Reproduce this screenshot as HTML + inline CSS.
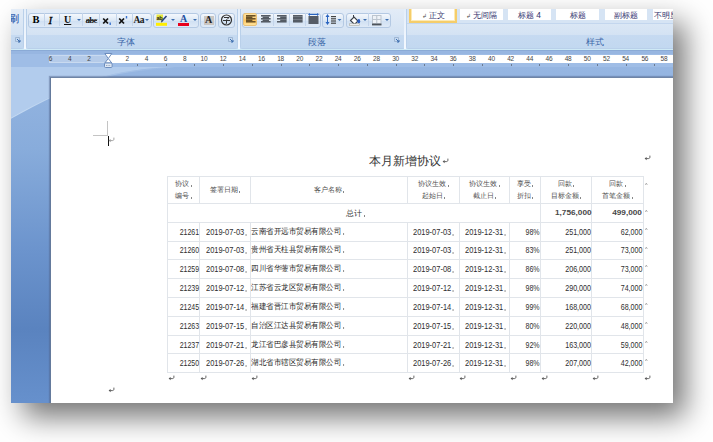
<!DOCTYPE html>
<html><head><meta charset="utf-8">
<style>
*{box-sizing:border-box;margin:0;padding:0}
html,body{width:713px;height:442px;overflow:hidden;background:#fff;font-family:"Liberation Sans",sans-serif}
#shadow{position:absolute;left:11px;top:9px;width:662px;height:394px;box-shadow:12px 14px 28px rgba(0,0,0,.55)}
#win{position:absolute;left:11px;top:9px;width:662px;height:394px;overflow:hidden;background:#c4d9f1}
#in{position:absolute;left:-11px;top:-9px;width:713px;height:442px}
.a{position:absolute}
/* ribbon */
#ribbon{left:0;top:0;width:713px;height:50px;background:#c9def5}
.grp{position:absolute;top:9px;height:40px;border:1px solid #b9d0ea;border-top:none;border-radius:0 0 3px 3px;background:linear-gradient(#e3ecf7,#d3e2f3 70%,#d8e5f4)}
.lbl{position:absolute;left:0;right:0;bottom:0;height:13.5px;background:linear-gradient(#c6daf1,#c2d8f0);color:#3b67a8;font-size:8.5px;line-height:14px;text-align:center;padding-right:12px}
.bar{position:absolute;top:13px;height:15px;border:1px solid #b4c9e3;border-radius:3px;background:linear-gradient(#f4f8fd,#dce8f5 50%,#cfdff2 51%,#dfeaf7)}
.sep{position:absolute;top:13px;width:1px;height:13px;background:#c3d4ea}
/* ruler */
#rulerbg{left:0;top:49px;width:713px;height:19px;background:linear-gradient(#8fb2df,#9dbce6 3px,#a6c3ea)}
#docbg{left:0;top:68px;width:713px;height:380px;background:linear-gradient(#adc8eb,#9ebde6 40px,#80a6d8 120px,#6890c9 200px,#5b85c1 270px,#6390cc 340px)}
#page{left:50px;top:77px;width:700px;height:400px;background:#fff;border-left:1px solid #647a9c;border-top:1px solid #6f85a6;box-shadow:-1px -1px 1px rgba(80,100,140,.45)}
.num{position:absolute;top:55px;font-size:6.5px;line-height:8px;color:#444;width:20px;margin-left:-10px;text-align:center;letter-spacing:-0.3px}
/* table */
.ht{position:absolute;height:12px;line-height:12px;font-size:7.2px;color:#4e4e4e;text-align:center;white-space:nowrap}
.tt{position:absolute;height:12px;line-height:12px;font-size:8.3px;color:#2e2e2e;white-space:nowrap}
.tt.cj{font-size:7.5px;letter-spacing:0;color:#262626}
.tt.b{font-weight:bold;color:#484848;font-size:8px}
.cm{display:inline-block;width:1px;height:2px;background:#888;margin-left:1.5px;vertical-align:-1px}
.rm{position:absolute;width:2.5px;height:2.5px;border-left:1px solid #9a9a9a;border-top:1px solid #9a9a9a;transform:translate(1px,1px) rotate(45deg) scale(.65)}
.sep2{position:absolute;top:9px;width:2px;height:40px;background:linear-gradient(#e4eefa,#f4f9ff)}
.sty{background:#fff;font-size:8.4px;line-height:12px;color:#33336e;text-align:center;white-space:nowrap;overflow:hidden}
.pm2{font-size:6px;color:#555;margin-right:2px}
.pm{position:absolute;font-size:7.5px;color:#555}
</style></head><body>
<div id="shadow"></div>
<div id="win"><div id="in">
  <div id="ribbon" class="a"></div>
  <div class="grp" style="left:0;width:24px"><div class="lbl"></div>
    <div class="a" style="left:8px;top:5px;font-size:9.5px;color:#3460b0;line-height:10px;-webkit-text-stroke:0.2px #3460b0">刷</div></div>
  <div class="grp" style="left:26px;width:212px"><div class="lbl">字体</div></div>
  <div class="grp" style="left:240px;width:165px"><div class="lbl">段落</div></div>
  <div class="grp" style="left:406px;width:380px"><div class="lbl" style="text-align:left;padding-left:179px">样式</div></div>
  <div class="sep2 a" style="left:24px"></div>
  <div class="sep2 a" style="left:238px"></div>
  <div class="sep2 a" style="left:404px"></div>
  <!-- launchers -->
  <svg class="a" style="left:15px;top:37px" width="6" height="6"><path d="M0.5 0.5h4v4h-4z" fill="none" stroke="#9fb6d3"/><path d="M2 2l3 3M5 3v2h-2" stroke="#3d6fb0" fill="none"/></svg>
  <svg class="a" style="left:228px;top:37px" width="6" height="6"><path d="M0.5 0.5h4v4h-4z" fill="none" stroke="#9fb6d3"/><path d="M2 2l3 3M5 3v2h-2" stroke="#3d6fb0" fill="none"/></svg>
  <svg class="a" style="left:394px;top:37px" width="6" height="6"><path d="M0.5 0.5h4v4h-4z" fill="none" stroke="#9fb6d3"/><path d="M2 2l3 3M5 3v2h-2" stroke="#3d6fb0" fill="none"/></svg>
  <!-- font bar 1 -->
  <div class="bar" style="left:28px;width:124px"></div>
  <div class="sep" style="left:44px"></div><div class="sep" style="left:59px"></div><div class="sep" style="left:82px"></div><div class="sep" style="left:99px"></div><div class="sep" style="left:116px"></div><div class="sep" style="left:132px"></div>
  <div class="a" style="left:32.5px;top:14px;font:bold 10.5px/12px 'Liberation Serif',serif;color:#000">B</div>
  <div class="a" style="left:48.5px;top:14px;font:italic 11px/12px 'Liberation Serif',serif;color:#000;-webkit-text-stroke:0.3px #000">I</div>
  <div class="a" style="left:64px;top:14px;font:bold 10px/12px 'Liberation Serif',serif;color:#111;text-decoration:underline">U</div>
  <svg class="a" style="left:77px;top:19px" width="4" height="3"><path d="M0 0h4l-2 2z" fill="#3b6db0"/></svg>
  <div class="a" style="left:85.5px;top:14px;font:bold 9px/12px 'Liberation Serif',serif;color:#1a1a1a;letter-spacing:-0.7px">abc</div><div class="a" style="left:85.5px;top:20px;width:11px;height:1px;background:#333"></div>
  <svg class="a" style="left:102px;top:17px" width="10" height="9"><path d="M1.2 1.5L6 6.5M6 1.5L1.2 6.5" stroke="#111" stroke-width="1.7"/><rect x="7.5" y="5.5" width="1.4" height="2.5" fill="#3b74d0"/></svg>
  <svg class="a" style="left:118px;top:16px" width="10" height="9"><path d="M1.2 2.5L6 7.5M6 2.5L1.2 7.5" stroke="#111" stroke-width="1.7"/><rect x="7.8" y="0" width="1.4" height="2.5" fill="#3b74d0"/></svg>
  <div class="a" style="left:133.5px;top:14px;font:bold 9.5px/12px 'Liberation Serif',serif;color:#1a1a1a;letter-spacing:-0.6px">Aa</div>
  <svg class="a" style="left:145px;top:19px" width="4" height="3"><path d="M0 0h4l-2 2z" fill="#3b6db0"/></svg>
  <!-- font bar 2 -->
  <div class="bar" style="left:153px;width:46px"></div>
  <svg class="a" style="left:156px;top:14px" width="12" height="12"><rect x="0.5" y="0.5" width="6.5" height="6" fill="#e6e640"/><text x="0.6" y="6" font-size="5.5" font-weight="bold" font-family="Liberation Sans" fill="#222" letter-spacing="-0.5">ab</text><path d="M5.5 7.5L10.5 2" stroke="#28407a" stroke-width="1.6"/><path d="M5 8l1.2-0.3" stroke="#444" stroke-width="1"/><rect x="0" y="8.8" width="11" height="3" fill="#ffee00"/></svg>
  <svg class="a" style="left:171px;top:19px" width="4" height="3"><path d="M0 0h4l-2 2z" fill="#3b6db0"/></svg>
  <div class="a" style="left:180px;top:13px;font:bold 10px/11px 'Liberation Serif',serif;color:#2550a0">A</div>
  <div class="a" style="left:178px;top:23px;width:11px;height:3px;background:#e8001c"></div>
  <svg class="a" style="left:193px;top:19px" width="4" height="3"><path d="M0 0h4l-2 2z" fill="#3b6db0"/></svg>
  <!-- font bar 3/4 -->
  <div class="bar" style="left:200px;width:16px"></div>
  <div class="a" style="left:204px;top:16px;width:9.5px;height:8.8px;background:#cac6c2"></div>
  <div class="a" style="left:205px;top:14px;font:bold 10px/11px 'Liberation Serif',serif;color:#222">A</div>
  <div class="bar" style="left:218px;width:17px"></div>
  <svg class="a" style="left:220px;top:14px" width="13" height="12"><circle cx="6.5" cy="6" r="5" fill="none" stroke="#333" stroke-width="1.2"/><path d="M4 3.5h5l-2 2M3 6.5h7M6.5 5.5v4l-1 0.5" fill="none" stroke="#333" stroke-width="1"/></svg>
  <!-- paragraph -->
  <div class="bar" style="left:242px;width:79px"></div>
  <div class="a" style="left:243px;top:13px;width:14px;height:13px;border:1px solid #e9c27a;border-radius:2px;background:linear-gradient(#ffe3a0,#ffcf78 45%,#ffc257 55%,#ffe39a)"></div>
  <div class="sep" style="left:273px"></div><div class="sep" style="left:289px"></div><div class="sep" style="left:305px"></div>
  <svg class="a" style="left:245.5px;top:15.2px" width="11" height="8"><g fill="#6b5226"><rect x="0.0" y="0.00" width="9.6" height="1.55"/><rect x="0.0" y="1.50" width="6.4" height="1.55"/><rect x="0.0" y="3.00" width="9.6" height="1.55"/><rect x="0.0" y="4.50" width="6.4" height="1.55"/><rect x="0.0" y="6.00" width="9.6" height="1.55"/></g></svg>
  <svg class="a" style="left:260.5px;top:15.2px" width="11" height="8"><g fill="#545b64"><rect x="0.0" y="0.00" width="9.6" height="1.55"/><rect x="1.6" y="1.50" width="6.4" height="1.55"/><rect x="0.0" y="3.00" width="9.6" height="1.55"/><rect x="1.6" y="4.50" width="6.4" height="1.55"/><rect x="0.0" y="6.00" width="9.6" height="1.55"/></g></svg>
  <svg class="a" style="left:276.5px;top:15.2px" width="11" height="8"><g fill="#545b64"><rect x="0.0" y="0.00" width="9.6" height="1.55"/><rect x="3.2" y="1.50" width="6.4" height="1.55"/><rect x="0.0" y="3.00" width="9.6" height="1.55"/><rect x="3.2" y="4.50" width="6.4" height="1.55"/><rect x="0.0" y="6.00" width="9.6" height="1.55"/></g></svg>
  <svg class="a" style="left:292.5px;top:15.2px" width="11" height="8"><g fill="#545b64"><rect x="0.0" y="0.00" width="9.6" height="1.55"/><rect x="0.0" y="1.50" width="9.6" height="1.55"/><rect x="0.0" y="3.00" width="9.6" height="1.55"/><rect x="0.0" y="4.50" width="9.6" height="1.55"/><rect x="0.0" y="6.00" width="9.6" height="1.55"/></g></svg>
  <svg class="a" style="left:308px;top:13px" width="11" height="12"><path d="M0 1.5l2-1.5v3zM11 1.5l-2-1.5v3z" fill="#2a64c0"/><rect x="2" y="1" width="7" height="1" fill="#2a64c0"/><rect x="0.5" y="3" width="10" height="8" fill="#555c66"/></svg>
  <div class="bar" style="left:322px;width:22px"></div>
  <svg class="a" style="left:325px;top:14px" width="17" height="12"><path d="M2.5 0l2 3h-4zM2.5 11l2-3h-4z" fill="#2a64c0"/><rect x="2" y="2.5" width="1" height="6" fill="#2a64c0"/><g fill="#444"><rect x="6" y="2" width="5" height="1.2"/><rect x="6" y="4.2" width="5" height="1.2"/><rect x="6" y="6.4" width="5" height="1.2"/><rect x="6" y="8.6" width="5" height="1.2"/></g><path d="M12.5 5h4l-2 2z" fill="#3b6db0"/></svg>
  <div class="bar" style="left:346px;width:45px"></div>
  <div class="sep" style="left:368px"></div>
  <svg class="a" style="left:349px;top:14px" width="12" height="12"><path d="M1.5 6.5L5 3l4 4-3.5 3.5z" fill="#fff" stroke="#3a3f47" stroke-width="1.1"/><path d="M4.5 3.5V1" stroke="#3a3f47" stroke-width="1"/><ellipse cx="9.8" cy="7.3" rx="1.4" ry="2.2" fill="#2a5cc0"/><rect x="0.5" y="9.8" width="10" height="1.8" fill="#f4f4f4" stroke="#a9a9a0" stroke-width="0.6"/></svg>
  <svg class="a" style="left:363px;top:19px" width="4" height="3"><path d="M0 0h4l-2 2z" fill="#3b6db0"/></svg>
  <svg class="a" style="left:372px;top:15px" width="10" height="11"><rect x="0" y="0" width="9.5" height="9" fill="#bcc5cf"/><rect x="1" y="1" width="3.2" height="3" fill="#eef2f7"/><rect x="5.3" y="1" width="3.2" height="3" fill="#eef2f7"/><rect x="1" y="5" width="3.2" height="3" fill="#eef2f7"/><rect x="5.3" y="5" width="3.2" height="3" fill="#eef2f7"/><rect x="0" y="8.6" width="9.5" height="1.8" fill="#4d535a"/></svg>
  <svg class="a" style="left:385px;top:19px" width="4" height="3"><path d="M0 0h4l-2 2z" fill="#3b6db0"/></svg>
  <!-- styles gallery -->
  <div class="a" style="left:407px;top:9px;width:300px;height:15px;background:#d6e4f4;border-bottom:1px solid #c3d6ee"></div>
  <div class="a" style="left:409px;top:6px;width:48px;height:17px;border:2px solid #f5cd6a;border-top:none;background:#fff;box-shadow:inset 0 0 0 1px #fdeab4"></div>
  <div class="a sty" style="left:411px;top:9px;width:44px;height:12px;background:transparent"><span class="pm2">↲</span>正文</div>
  <div class="a sty" style="left:459.5px;top:9px;width:43.5px;height:11px"><span class="pm2">↲</span>无间隔</div>
  <div class="a sty" style="left:508px;top:9px;width:43px;height:11px">标题 4</div>
  <div class="a sty" style="left:556px;top:9px;width:43px;height:11px">标题</div>
  <div class="a sty" style="left:604.5px;top:9px;width:42.5px;height:11px">副标题</div>
  <div class="a sty" style="left:653px;top:9px;width:43px;height:11px;text-align:left;padding-left:1px">不明显</div>
  <svg class="a" style="left:0;top:49px" width="713" height="400">
    <defs>
      <linearGradient id="bgv" x1="0" y1="0" x2="0" y2="1">
        <stop offset="0" stop-color="#99b8e3"/>
        <stop offset="0.25" stop-color="#88acdb"/>
        <stop offset="0.5" stop-color="#6c94cd"/>
        <stop offset="0.7" stop-color="#5a83bf"/>
        <stop offset="0.88" stop-color="#6690cc"/>
        <stop offset="1" stop-color="#6690cc"/>
      </linearGradient>
    </defs>
    <rect x="0" y="0" width="713" height="400" fill="url(#bgv)"/>
    <path d="M0 18 H175 C 110 20, 70 34, 0 75 Z" fill="#b2cced"/>
    <defs><linearGradient id="swl" x1="0" y1="0" x2="1" y2="0"><stop offset="0" stop-color="#c6dbf3" stop-opacity="1"/><stop offset="0.3" stop-color="#c6dbf3" stop-opacity="0.8"/><stop offset="1" stop-color="#c6dbf3" stop-opacity="0"/></linearGradient></defs><path d="M175 18.5 C 110 20.5, 70 34.5, 0 75.5" stroke="url(#swl)" stroke-width="1.1" fill="none"/>
    <rect x="0" y="0" width="713" height="18" fill="#9fbde6"/>
    <rect x="0" y="0" width="713" height="1" fill="#cfeaf6"/>
    <rect x="0" y="1" width="713" height="1" fill="#8aaad6"/>
    <rect x="0" y="2" width="713" height="3" fill="#97b6e1"/>
  </svg>
  <div id="page" class="a"></div>
  <div class="a" style="left:108px;top:55px;width:600px;height:8px;background:#fff"></div>
  <div class="a" style="left:49px;top:55px;width:59px;height:8px;background:#b5cbe9;border:1px solid #c9daf0"></div>
  <div class="num" style="left:50.5px">6</div><div class="num" style="left:69.7px">4</div><div class="num" style="left:88.8px">2</div><div class="num" style="left:127.2px">2</div><div class="num" style="left:146.3px">4</div><div class="num" style="left:165.5px">6</div><div class="num" style="left:184.7px">8</div><div class="num" style="left:203.9px">10</div><div class="num" style="left:223.0px">12</div><div class="num" style="left:242.2px">14</div><div class="num" style="left:261.4px">16</div><div class="num" style="left:280.5px">18</div><div class="num" style="left:299.7px">20</div><div class="num" style="left:318.9px">22</div><div class="num" style="left:338.0px">24</div><div class="num" style="left:357.2px">26</div><div class="num" style="left:376.4px">28</div><div class="num" style="left:395.6px">30</div><div class="num" style="left:414.7px">32</div><div class="num" style="left:433.9px">34</div><div class="num" style="left:453.1px">36</div><div class="num" style="left:472.2px">38</div><div class="num" style="left:491.4px">40</div><div class="num" style="left:510.6px">42</div><div class="num" style="left:529.7px">44</div><div class="num" style="left:548.9px">46</div><div class="num" style="left:568.1px">48</div><div class="num" style="left:587.2px">50</div><div class="num" style="left:606.4px">52</div><div class="num" style="left:625.6px">54</div><div class="num" style="left:644.8px">56</div><div class="num" style="left:663.9px">58</div><div class="num" style="left:683.1px">60</div><div class="a" style="left:136.8px;top:64px;width:1px;height:2px;background:#6b7a90"></div><div class="a" style="left:165.5px;top:64px;width:1px;height:2px;background:#6b7a90"></div><div class="a" style="left:194.2px;top:64px;width:1px;height:2px;background:#6b7a90"></div><div class="a" style="left:223.0px;top:64px;width:1px;height:2px;background:#6b7a90"></div><div class="a" style="left:251.8px;top:64px;width:1px;height:2px;background:#6b7a90"></div><div class="a" style="left:280.5px;top:64px;width:1px;height:2px;background:#6b7a90"></div><div class="a" style="left:309.2px;top:64px;width:1px;height:2px;background:#6b7a90"></div><div class="a" style="left:338.0px;top:64px;width:1px;height:2px;background:#6b7a90"></div><div class="a" style="left:366.8px;top:64px;width:1px;height:2px;background:#6b7a90"></div><div class="a" style="left:395.5px;top:64px;width:1px;height:2px;background:#6b7a90"></div><div class="a" style="left:424.2px;top:64px;width:1px;height:2px;background:#6b7a90"></div><div class="a" style="left:453.0px;top:64px;width:1px;height:2px;background:#6b7a90"></div><div class="a" style="left:481.8px;top:64px;width:1px;height:2px;background:#6b7a90"></div><div class="a" style="left:510.5px;top:64px;width:1px;height:2px;background:#6b7a90"></div><div class="a" style="left:539.2px;top:64px;width:1px;height:2px;background:#6b7a90"></div><div class="a" style="left:568.0px;top:64px;width:1px;height:2px;background:#6b7a90"></div><div class="a" style="left:596.8px;top:64px;width:1px;height:2px;background:#6b7a90"></div><div class="a" style="left:625.5px;top:64px;width:1px;height:2px;background:#6b7a90"></div><div class="a" style="left:654.2px;top:64px;width:1px;height:2px;background:#6b7a90"></div>
  <svg class="a" style="left:103.5px;top:53px" width="9" height="15"><path d="M0.8 0.5h7l-3.5 5z" fill="#fff" stroke="#6d8dbd" stroke-width="1"/><path d="M4.3 5.5l3.5 4.5h-7z" fill="#fff" stroke="#6d8dbd" stroke-width="1"/><rect x="0.5" y="10" width="7.6" height="4.5" rx="1" fill="#dfe8f4" stroke="#6d8dbd"/><path d="M2 12.5h4.5" stroke="#9aaac0" stroke-width="1.2" stroke-dasharray="1 0.6"/></svg>
  <!-- crop marks -->
  <div class="a" style="left:107px;top:121px;width:1px;height:15px;background:#c4c4c4"></div>
  <div class="a" style="left:93px;top:135px;width:15px;height:1px;background:#c4c4c4"></div>
  <div class="a" style="left:108px;top:136px;width:1px;height:10px;background:#111"></div>
  <svg class="a" style="left:107.5px;top:136.0px" width="7" height="7"><path d="M0.6 4.6L2.6 3v3.2z" fill="#999"/><path d="M2.2 4.6H4.3c1 0 1.6-0.5 1.6-1.5V1.6" stroke="#999" stroke-width="0.9" fill="none"/></svg>
  <div class="a" style="left:369px;top:153.5px;font-size:12px;line-height:14px;color:#333;font-weight:300">本月新增协议</div>
  <svg class="a" style="left:442.2px;top:157.0px" width="7" height="7"><path d="M0.6 4.6L2.6 3v3.2z" fill="#555"/><path d="M2.2 4.6H4.3c1 0 1.6-0.5 1.6-1.5V1.6" stroke="#555" stroke-width="0.9" fill="none"/></svg>
  <svg class="a" style="left:644.2px;top:154.0px" width="7" height="7"><path d="M0.6 4.6L2.6 3v3.2z" fill="#555"/><path d="M2.2 4.6H4.3c1 0 1.6-0.5 1.6-1.5V1.6" stroke="#555" stroke-width="0.9" fill="none"/></svg>
  <svg class="a" style="left:108.2px;top:386.0px" width="7" height="7"><path d="M0.6 4.6L2.6 3v3.2z" fill="#555"/><path d="M2.2 4.6H4.3c1 0 1.6-0.5 1.6-1.5V1.6" stroke="#555" stroke-width="0.9" fill="none"/></svg>

  <!--TABLE-->
<div class="a" style="left:167.0px;top:176.0px;width:477.0px;height:1px;background:#e1e5ea"></div>
<div class="a" style="left:167.0px;top:202.7px;width:477.0px;height:1px;background:#e1e5ea"></div>
<div class="a" style="left:167.0px;top:221.7px;width:477.0px;height:1px;background:#e1e5ea"></div>
<div class="a" style="left:167.0px;top:240.6px;width:477.0px;height:1px;background:#e1e5ea"></div>
<div class="a" style="left:167.0px;top:259.0px;width:477.0px;height:1px;background:#e1e5ea"></div>
<div class="a" style="left:167.0px;top:277.8px;width:477.0px;height:1px;background:#e1e5ea"></div>
<div class="a" style="left:167.0px;top:296.7px;width:477.0px;height:1px;background:#e1e5ea"></div>
<div class="a" style="left:167.0px;top:315.8px;width:477.0px;height:1px;background:#e1e5ea"></div>
<div class="a" style="left:167.0px;top:334.8px;width:477.0px;height:1px;background:#e1e5ea"></div>
<div class="a" style="left:167.0px;top:353.1px;width:477.0px;height:1px;background:#e1e5ea"></div>
<div class="a" style="left:167.0px;top:371.7px;width:477.0px;height:1px;background:#e1e5ea"></div>
<div class="a" style="left:167.0px;top:176.5px;width:1px;height:195.7px;background:#e1e5ea"></div>
<div class="a" style="left:199.0px;top:176.5px;width:1px;height:26.7px;background:#e1e5ea"></div>
<div class="a" style="left:199.0px;top:222.2px;width:1px;height:150.0px;background:#e1e5ea"></div>
<div class="a" style="left:250.0px;top:176.5px;width:1px;height:26.7px;background:#e1e5ea"></div>
<div class="a" style="left:250.0px;top:222.2px;width:1px;height:150.0px;background:#e1e5ea"></div>
<div class="a" style="left:407.0px;top:176.5px;width:1px;height:26.7px;background:#e1e5ea"></div>
<div class="a" style="left:407.0px;top:222.2px;width:1px;height:150.0px;background:#e1e5ea"></div>
<div class="a" style="left:458.5px;top:176.5px;width:1px;height:26.7px;background:#e1e5ea"></div>
<div class="a" style="left:458.5px;top:222.2px;width:1px;height:150.0px;background:#e1e5ea"></div>
<div class="a" style="left:509.0px;top:176.5px;width:1px;height:26.7px;background:#e1e5ea"></div>
<div class="a" style="left:509.0px;top:222.2px;width:1px;height:150.0px;background:#e1e5ea"></div>
<div class="a" style="left:540.0px;top:176.5px;width:1px;height:195.7px;background:#e1e5ea"></div>
<div class="a" style="left:591.0px;top:176.5px;width:1px;height:26.7px;background:#e1e5ea"></div>
<div class="a" style="left:591.0px;top:203.2px;width:1px;height:19.0px;background:#e1e5ea"></div>
<div class="a" style="left:591.0px;top:222.2px;width:1px;height:150.0px;background:#e1e5ea"></div>
<div class="a" style="left:643.0px;top:176.5px;width:1px;height:195.7px;background:#e1e5ea"></div>
<div class="ht" style="left:167.5px;width:32.0px;top:177.9px">协议<i class="cm"></i></div>
<div class="ht" style="left:167.5px;width:32.0px;top:190.3px">编号<i class="cm"></i></div>
<div class="ht" style="left:199.5px;width:51.0px;top:184.2px">签署日期<i class="cm"></i></div>
<div class="ht" style="left:250.5px;width:157.0px;top:184.2px">客户名称<i class="cm"></i></div>
<div class="ht" style="left:407.5px;width:51.5px;top:177.9px">协议生效<i class="cm"></i></div>
<div class="ht" style="left:407.5px;width:51.5px;top:190.3px">起始日<i class="cm"></i></div>
<div class="ht" style="left:459.0px;width:50.5px;top:177.9px">协议生效<i class="cm"></i></div>
<div class="ht" style="left:459.0px;width:50.5px;top:190.3px">截止日<i class="cm"></i></div>
<div class="ht" style="left:509.5px;width:31.0px;top:177.9px">享受<i class="cm"></i></div>
<div class="ht" style="left:509.5px;width:31.0px;top:190.3px">折扣<i class="cm"></i></div>
<div class="ht" style="left:540.5px;width:51.0px;top:177.9px">回款<i class="cm"></i></div>
<div class="ht" style="left:540.5px;width:51.0px;top:190.3px">目标金额<i class="cm"></i></div>
<div class="ht" style="left:591.5px;width:52.0px;top:177.9px">回款<i class="cm"></i></div>
<div class="ht" style="left:591.5px;width:52.0px;top:190.3px">首笔金额<i class="cm"></i></div>
<div class="tt" style="left:167.5px;width:373.0px;top:206.7px;text-align:center;font-weight:500;color:#333;padding-left:3px">总计<i class="cm"></i></div>
<div class="tt b" style="right:121.9px;top:206.7px;transform:scaleX(1.03);transform-origin:100% 50%">1,756,000</div>
<div class="tt b" style="right:71.0px;top:206.7px;transform:scaleX(1.03);transform-origin:100% 50%">499,000</div>
<i class="rm" style="left:644.2px;top:209px"></i>
<i class="rm" style="left:644.2px;top:182px"></i>
<div class="tt" style="right:514.4px;top:225.6px;transform:scaleX(0.840);transform-origin:100% 50%">21261</div>
<div class="tt" style="left:205.7px;top:225.6px;transform:scaleX(0.900);transform-origin:0 50%">2019-07-03<i class="cm"></i></div>
<div class="tt cj" style="left:251.0px;top:225.6px;transform:scaleX(0.94);transform-origin:0 50%">云南省开远市贸易有限公司<i class="cm"></i></div>
<div class="tt" style="left:413.3px;top:225.6px;transform:scaleX(0.900);transform-origin:0 50%">2019-07-03<i class="cm"></i></div>
<div class="tt" style="left:464.7px;top:225.6px;transform:scaleX(0.900);transform-origin:0 50%">2019-12-31<i class="cm"></i></div>
<div class="tt" style="right:173.2px;top:225.6px;transform:scaleX(0.850);transform-origin:100% 50%">98%</div>
<div class="tt" style="right:121.9px;top:225.6px;transform:scaleX(0.860);transform-origin:100% 50%">251,000</div>
<div class="tt" style="right:71.0px;top:225.6px;transform:scaleX(0.855);transform-origin:100% 50%">62,000</div>
<i class="rm" style="left:644.2px;top:227.1px"></i>
<div class="tt" style="right:514.4px;top:244.3px;transform:scaleX(0.840);transform-origin:100% 50%">21260</div>
<div class="tt" style="left:205.7px;top:244.3px;transform:scaleX(0.900);transform-origin:0 50%">2019-07-03<i class="cm"></i></div>
<div class="tt cj" style="left:251.0px;top:244.3px;transform:scaleX(0.94);transform-origin:0 50%">贵州省天柱县贸易有限公司<i class="cm"></i></div>
<div class="tt" style="left:413.3px;top:244.3px;transform:scaleX(0.900);transform-origin:0 50%">2019-07-03<i class="cm"></i></div>
<div class="tt" style="left:464.7px;top:244.3px;transform:scaleX(0.900);transform-origin:0 50%">2019-12-31<i class="cm"></i></div>
<div class="tt" style="right:173.2px;top:244.3px;transform:scaleX(0.850);transform-origin:100% 50%">83%</div>
<div class="tt" style="right:121.9px;top:244.3px;transform:scaleX(0.860);transform-origin:100% 50%">251,000</div>
<div class="tt" style="right:71.0px;top:244.3px;transform:scaleX(0.855);transform-origin:100% 50%">73,000</div>
<i class="rm" style="left:644.2px;top:245.8px"></i>
<div class="tt" style="right:514.4px;top:262.9px;transform:scaleX(0.840);transform-origin:100% 50%">21259</div>
<div class="tt" style="left:205.7px;top:262.9px;transform:scaleX(0.900);transform-origin:0 50%">2019-07-08<i class="cm"></i></div>
<div class="tt cj" style="left:251.0px;top:262.9px;transform:scaleX(0.94);transform-origin:0 50%">四川省华蓥市贸易有限公司<i class="cm"></i></div>
<div class="tt" style="left:413.3px;top:262.9px;transform:scaleX(0.900);transform-origin:0 50%">2019-07-08<i class="cm"></i></div>
<div class="tt" style="left:464.7px;top:262.9px;transform:scaleX(0.900);transform-origin:0 50%">2019-12-31<i class="cm"></i></div>
<div class="tt" style="right:173.2px;top:262.9px;transform:scaleX(0.850);transform-origin:100% 50%">86%</div>
<div class="tt" style="right:121.9px;top:262.9px;transform:scaleX(0.860);transform-origin:100% 50%">206,000</div>
<div class="tt" style="right:71.0px;top:262.9px;transform:scaleX(0.855);transform-origin:100% 50%">73,000</div>
<i class="rm" style="left:644.2px;top:264.4px"></i>
<div class="tt" style="right:514.4px;top:281.8px;transform:scaleX(0.840);transform-origin:100% 50%">21239</div>
<div class="tt" style="left:205.7px;top:281.8px;transform:scaleX(0.900);transform-origin:0 50%">2019-07-12<i class="cm"></i></div>
<div class="tt cj" style="left:251.0px;top:281.8px;transform:scaleX(0.94);transform-origin:0 50%">江苏省云龙区贸易有限公司<i class="cm"></i></div>
<div class="tt" style="left:413.3px;top:281.8px;transform:scaleX(0.900);transform-origin:0 50%">2019-07-12<i class="cm"></i></div>
<div class="tt" style="left:464.7px;top:281.8px;transform:scaleX(0.900);transform-origin:0 50%">2019-12-31<i class="cm"></i></div>
<div class="tt" style="right:173.2px;top:281.8px;transform:scaleX(0.850);transform-origin:100% 50%">98%</div>
<div class="tt" style="right:121.9px;top:281.8px;transform:scaleX(0.860);transform-origin:100% 50%">290,000</div>
<div class="tt" style="right:71.0px;top:281.8px;transform:scaleX(0.855);transform-origin:100% 50%">74,000</div>
<i class="rm" style="left:644.2px;top:283.2px"></i>
<div class="tt" style="right:514.4px;top:300.8px;transform:scaleX(0.840);transform-origin:100% 50%">21245</div>
<div class="tt" style="left:205.7px;top:300.8px;transform:scaleX(0.900);transform-origin:0 50%">2019-07-14<i class="cm"></i></div>
<div class="tt cj" style="left:251.0px;top:300.8px;transform:scaleX(0.94);transform-origin:0 50%">福建省晋江市贸易有限公司<i class="cm"></i></div>
<div class="tt" style="left:413.3px;top:300.8px;transform:scaleX(0.900);transform-origin:0 50%">2019-07-14<i class="cm"></i></div>
<div class="tt" style="left:464.7px;top:300.8px;transform:scaleX(0.900);transform-origin:0 50%">2019-12-31<i class="cm"></i></div>
<div class="tt" style="right:173.2px;top:300.8px;transform:scaleX(0.850);transform-origin:100% 50%">99%</div>
<div class="tt" style="right:121.9px;top:300.8px;transform:scaleX(0.860);transform-origin:100% 50%">168,000</div>
<div class="tt" style="right:71.0px;top:300.8px;transform:scaleX(0.855);transform-origin:100% 50%">68,000</div>
<i class="rm" style="left:644.2px;top:302.2px"></i>
<div class="tt" style="right:514.4px;top:319.8px;transform:scaleX(0.840);transform-origin:100% 50%">21263</div>
<div class="tt" style="left:205.7px;top:319.8px;transform:scaleX(0.900);transform-origin:0 50%">2019-07-15<i class="cm"></i></div>
<div class="tt cj" style="left:251.0px;top:319.8px;transform:scaleX(0.94);transform-origin:0 50%">自治区江达县贸易有限公司<i class="cm"></i></div>
<div class="tt" style="left:413.3px;top:319.8px;transform:scaleX(0.900);transform-origin:0 50%">2019-07-15<i class="cm"></i></div>
<div class="tt" style="left:464.7px;top:319.8px;transform:scaleX(0.900);transform-origin:0 50%">2019-12-31<i class="cm"></i></div>
<div class="tt" style="right:173.2px;top:319.8px;transform:scaleX(0.850);transform-origin:100% 50%">80%</div>
<div class="tt" style="right:121.9px;top:319.8px;transform:scaleX(0.860);transform-origin:100% 50%">220,000</div>
<div class="tt" style="right:71.0px;top:319.8px;transform:scaleX(0.855);transform-origin:100% 50%">48,000</div>
<i class="rm" style="left:644.2px;top:321.3px"></i>
<div class="tt" style="right:514.4px;top:338.5px;transform:scaleX(0.840);transform-origin:100% 50%">21237</div>
<div class="tt" style="left:205.7px;top:338.5px;transform:scaleX(0.900);transform-origin:0 50%">2019-07-21<i class="cm"></i></div>
<div class="tt cj" style="left:251.0px;top:338.5px;transform:scaleX(0.94);transform-origin:0 50%">龙江省巴彦县贸易有限公司<i class="cm"></i></div>
<div class="tt" style="left:413.3px;top:338.5px;transform:scaleX(0.900);transform-origin:0 50%">2019-07-21<i class="cm"></i></div>
<div class="tt" style="left:464.7px;top:338.5px;transform:scaleX(0.900);transform-origin:0 50%">2019-12-31<i class="cm"></i></div>
<div class="tt" style="right:173.2px;top:338.5px;transform:scaleX(0.850);transform-origin:100% 50%">92%</div>
<div class="tt" style="right:121.9px;top:338.5px;transform:scaleX(0.860);transform-origin:100% 50%">163,000</div>
<div class="tt" style="right:71.0px;top:338.5px;transform:scaleX(0.855);transform-origin:100% 50%">59,000</div>
<i class="rm" style="left:644.2px;top:340.0px"></i>
<div class="tt" style="right:514.4px;top:356.9px;transform:scaleX(0.840);transform-origin:100% 50%">21250</div>
<div class="tt" style="left:205.7px;top:356.9px;transform:scaleX(0.900);transform-origin:0 50%">2019-07-26<i class="cm"></i></div>
<div class="tt cj" style="left:251.0px;top:356.9px;transform:scaleX(0.94);transform-origin:0 50%">湖北省市辖区贸易有限公司<i class="cm"></i></div>
<div class="tt" style="left:413.3px;top:356.9px;transform:scaleX(0.900);transform-origin:0 50%">2019-07-26<i class="cm"></i></div>
<div class="tt" style="left:464.7px;top:356.9px;transform:scaleX(0.900);transform-origin:0 50%">2019-12-31<i class="cm"></i></div>
<div class="tt" style="right:173.2px;top:356.9px;transform:scaleX(0.850);transform-origin:100% 50%">98%</div>
<div class="tt" style="right:121.9px;top:356.9px;transform:scaleX(0.860);transform-origin:100% 50%">207,000</div>
<div class="tt" style="right:71.0px;top:356.9px;transform:scaleX(0.855);transform-origin:100% 50%">42,000</div>
<i class="rm" style="left:644.2px;top:358.4px"></i>
<svg class="a" style="left:168.2px;top:374px" width="7" height="7"><path d="M0.6 4.6L2.6 3v3.2z" fill="#555"/><path d="M2.2 4.6H4.3c1 0 1.6-0.5 1.6-1.5V1.6" stroke="#555" stroke-width="0.9" fill="none"/></svg>
<svg class="a" style="left:200.2px;top:374px" width="7" height="7"><path d="M0.6 4.6L2.6 3v3.2z" fill="#555"/><path d="M2.2 4.6H4.3c1 0 1.6-0.5 1.6-1.5V1.6" stroke="#555" stroke-width="0.9" fill="none"/></svg>
<svg class="a" style="left:251.2px;top:374px" width="7" height="7"><path d="M0.6 4.6L2.6 3v3.2z" fill="#555"/><path d="M2.2 4.6H4.3c1 0 1.6-0.5 1.6-1.5V1.6" stroke="#555" stroke-width="0.9" fill="none"/></svg>
<svg class="a" style="left:408.2px;top:374px" width="7" height="7"><path d="M0.6 4.6L2.6 3v3.2z" fill="#555"/><path d="M2.2 4.6H4.3c1 0 1.6-0.5 1.6-1.5V1.6" stroke="#555" stroke-width="0.9" fill="none"/></svg>
<svg class="a" style="left:459.2px;top:374px" width="7" height="7"><path d="M0.6 4.6L2.6 3v3.2z" fill="#555"/><path d="M2.2 4.6H4.3c1 0 1.6-0.5 1.6-1.5V1.6" stroke="#555" stroke-width="0.9" fill="none"/></svg>
<svg class="a" style="left:510.2px;top:374px" width="7" height="7"><path d="M0.6 4.6L2.6 3v3.2z" fill="#555"/><path d="M2.2 4.6H4.3c1 0 1.6-0.5 1.6-1.5V1.6" stroke="#555" stroke-width="0.9" fill="none"/></svg>
<svg class="a" style="left:541.2px;top:374px" width="7" height="7"><path d="M0.6 4.6L2.6 3v3.2z" fill="#555"/><path d="M2.2 4.6H4.3c1 0 1.6-0.5 1.6-1.5V1.6" stroke="#555" stroke-width="0.9" fill="none"/></svg>
<svg class="a" style="left:592.2px;top:374px" width="7" height="7"><path d="M0.6 4.6L2.6 3v3.2z" fill="#555"/><path d="M2.2 4.6H4.3c1 0 1.6-0.5 1.6-1.5V1.6" stroke="#555" stroke-width="0.9" fill="none"/></svg>
<svg class="a" style="left:644.2px;top:374px" width="7" height="7"><path d="M0.6 4.6L2.6 3v3.2z" fill="#555"/><path d="M2.2 4.6H4.3c1 0 1.6-0.5 1.6-1.5V1.6" stroke="#555" stroke-width="0.9" fill="none"/></svg>
<!--/TABLE-->
</div></div>
</body></html>
